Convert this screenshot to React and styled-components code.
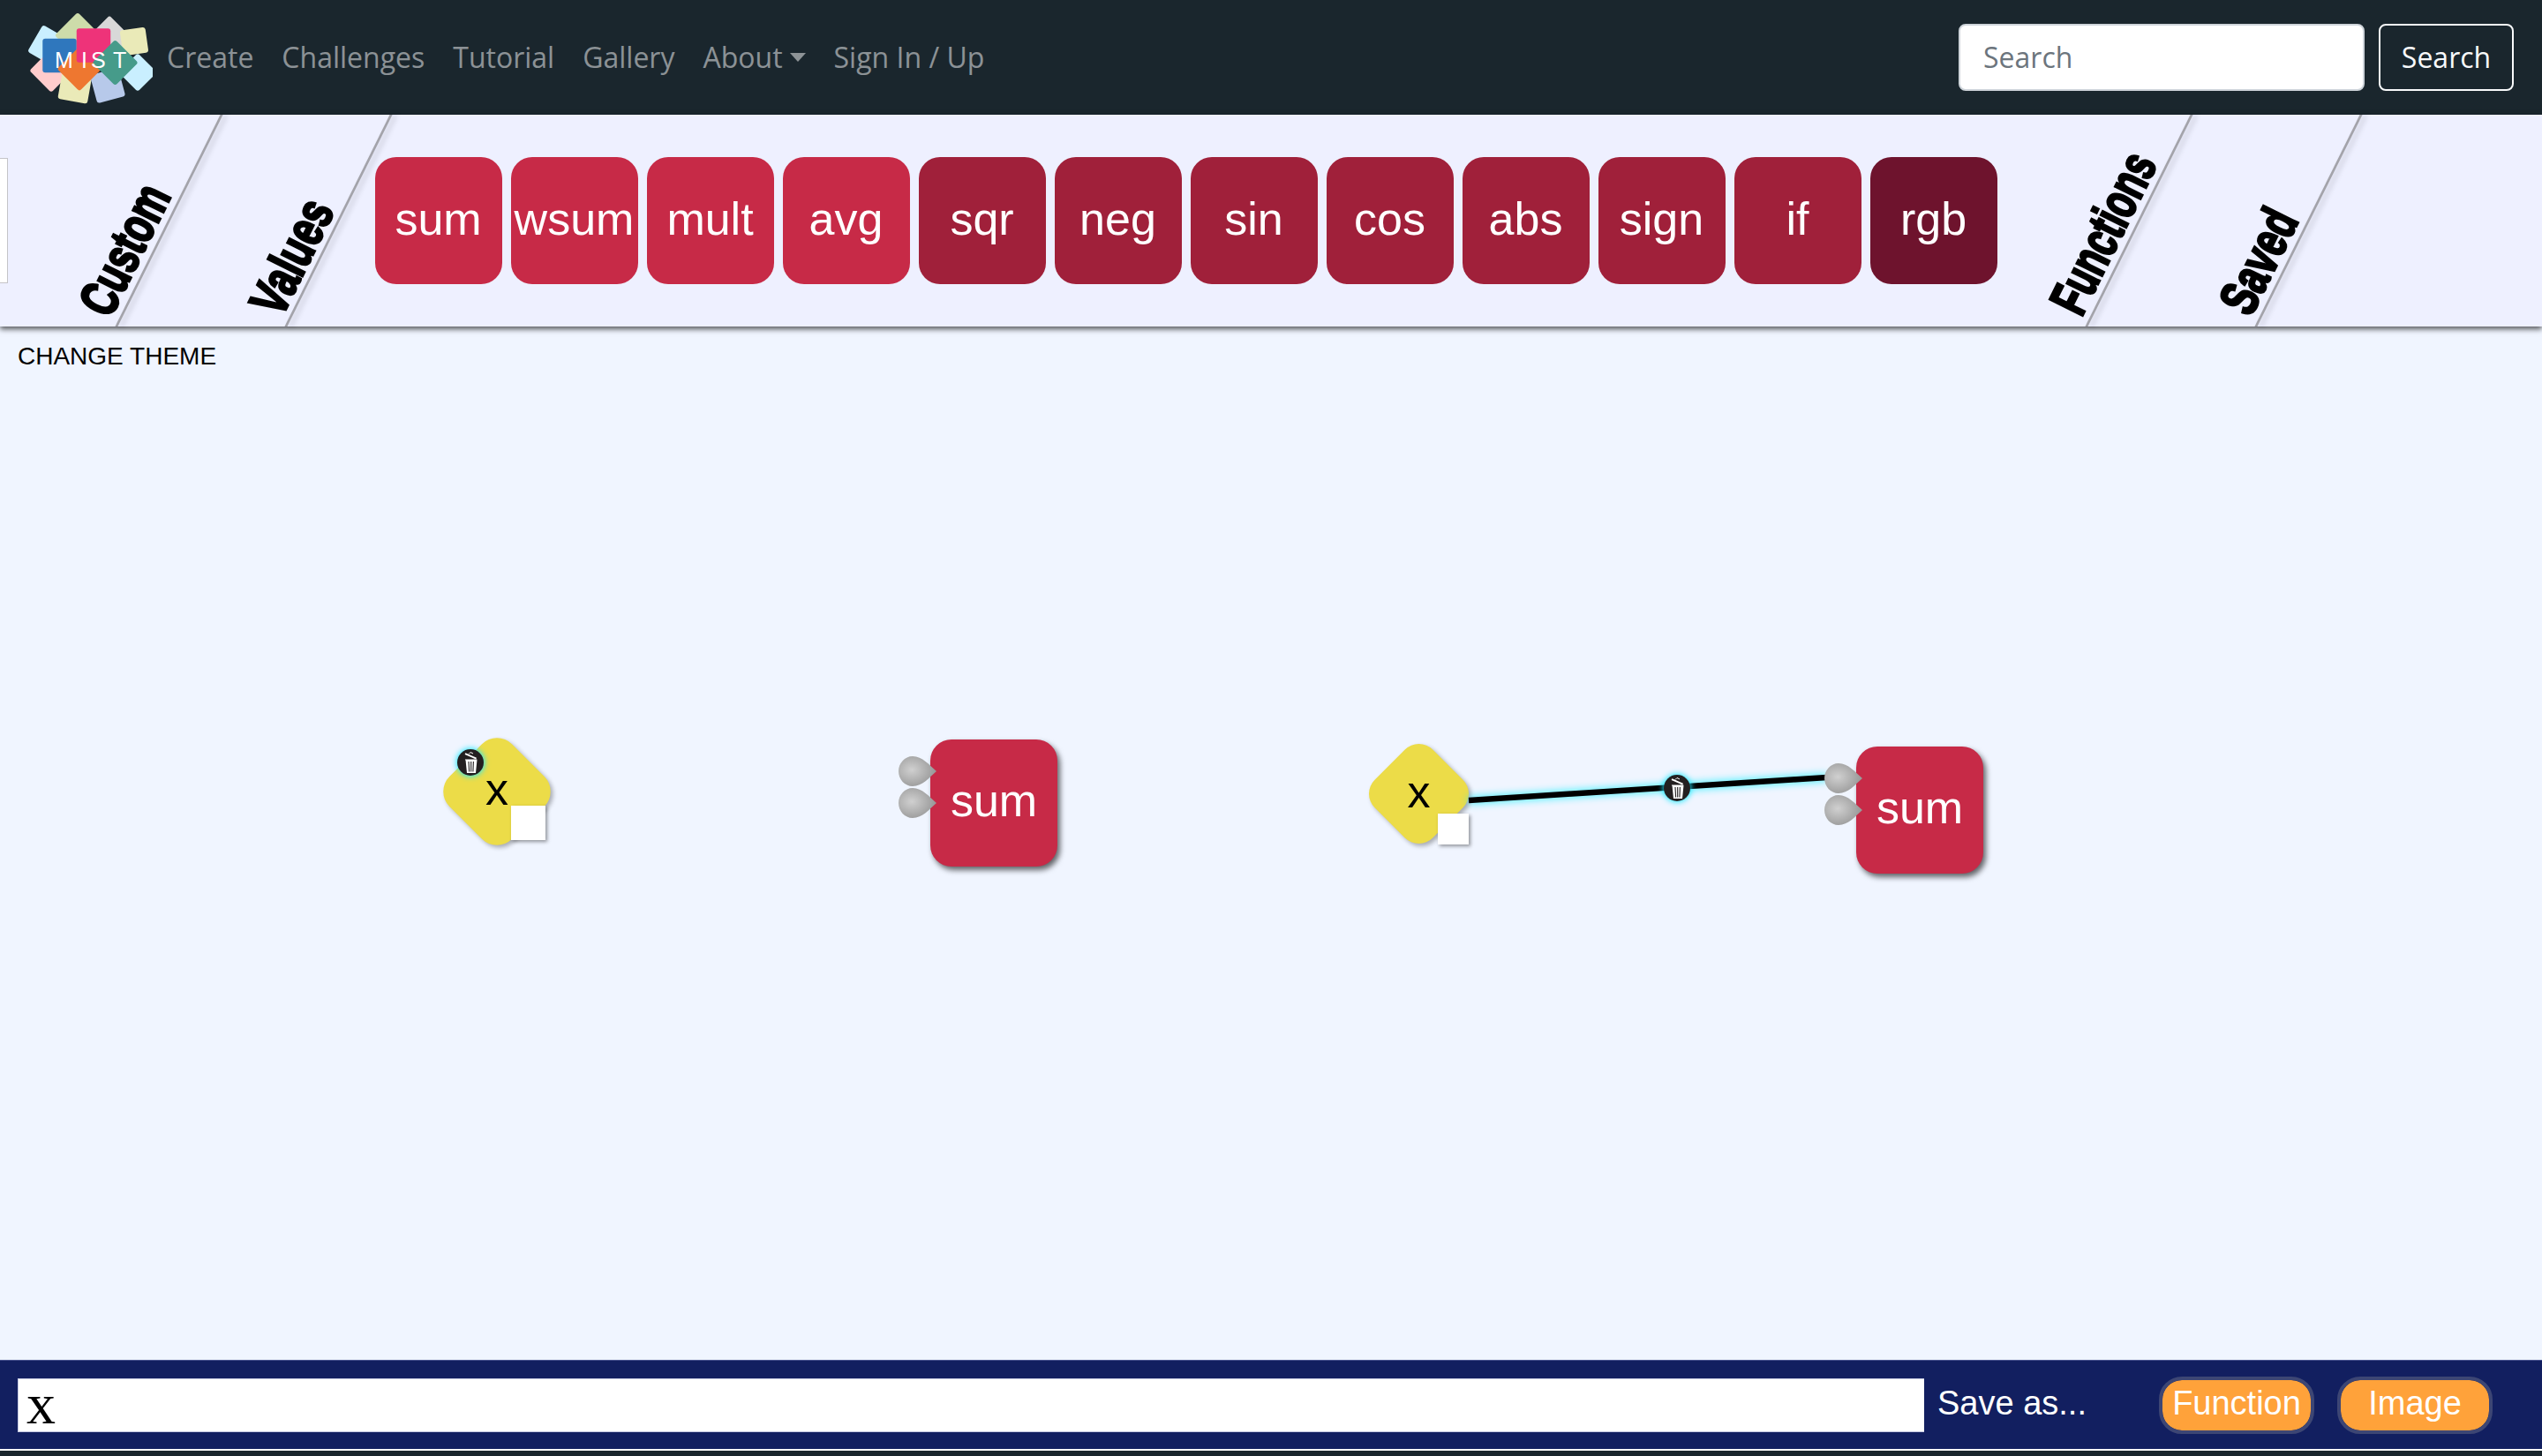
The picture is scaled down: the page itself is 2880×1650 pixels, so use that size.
import React from 'react';
import styled, { createGlobalStyle } from 'styled-components';

const Global = createGlobalStyle`
  html, body { margin: 0; padding: 0; background: #f0f5ff; overflow: hidden; }
  * { box-sizing: border-box; }
`;

const Page = styled.div`
  display: flex; flex-direction: column; height: 1650px; width: 2880px;
  font-family: "Liberation Sans", Arial, sans-serif;
`;

const Navbar = styled.nav`
  display: flex; align-items: center; height: 130px; flex: none; padding: 0 32px;
  background: #1a262d; font-family: "Open Sans", sans-serif; font-size: 32px;
`;
const Logo = styled.svg`width: 141px; height: 130px; flex: none;`;
const NavLinks = styled.div`display: flex; flex: 1; align-items: center; margin-top: -1px;`;
const NavLink = styled.a`
  display: flex; align-items: center; padding: 0 16px; color: rgba(255,255,255,.5); line-height: 48px;
`;
const Caret = styled.span`
  margin-left: 8px; width: 0; height: 0; border-top: 10px solid rgba(255,255,255,.5);
  border-left: 9px solid transparent; border-right: 9px solid transparent;
`;
const SearchForm = styled.form`display: flex; gap: 16px; margin: 0;`;
const SearchInput = styled.input`
  width: 460px; height: 76px; padding: 0 26px 2px; border: 2px solid #ced4da; border-radius: 8px;
  background: #fff; font: 32px "Open Sans", sans-serif; color: #495057;
  &::placeholder { color: #6c757d; opacity: 1; }
`;
const SearchButton = styled.button`
  width: 153px; height: 76px; padding: 0 0 2px; background: transparent; border: 2px solid #f8f9fa; border-radius: 8px;
  color: #f8f9fa; font: 32px "Open Sans", sans-serif;
`;

const Toolbar = styled.div`
  position: relative; z-index: 1; display: flex; flex: none; height: 240px; background: #eef0ff;
  box-shadow: 0 3px 6px rgba(0,0,0,.65);
`;
const Stub = styled.div`
  flex: none; align-self: center; width: 9px; height: 142px; margin-top: -1px; background: #fff;
  border: 1px solid #c4c4c8; border-left: 0;
`;
const Tab = styled.div`
  position: relative; flex: none; width: ${p => p.$w}px; display: flex; align-items: center; justify-content: center;
  &::after {
    content: ""; position: absolute; top: 0; bottom: 0; right: 0; width: 3px; background: #a3a3aa;
    transform: skewX(-26.4deg); box-shadow: 5px 0 6px rgba(0,0,0,.2);
  }
`;
const TabLabel = styled.span`
  white-space: nowrap; color: #000; font: 900 60px/60px "Liberation Sans", sans-serif;
  -webkit-text-stroke: 3px #000;
  transform: translate(${p => p.$x}px, ${p => p.$y}px) rotate(-63.6deg) scaleX(${p => p.$sx});
`;
const Blocks = styled.div`display: flex; align-items: center; gap: 10px; padding-left: 40px; flex: none;`;
const Block = styled.div`
  width: 144px; height: 144px; padding-bottom: 4px; border-radius: 24px; display: flex; align-items: center; justify-content: center;
  color: #fff; font-size: 52px; background: ${p => p.$c};
`;

const Stage = styled.div`position: relative; flex: 1; background: #f0f5ff;`;
const ThemeButton = styled.div`
  position: absolute; left: 20px; top: 18px; font-size: 28px; line-height: 32px; color: #000;
`;
const SumNode = styled.div`
  position: absolute; left: ${p => p.$x}px; top: ${p => p.$y}px; width: 144px; height: 144px; padding-bottom: 6px;
  border-radius: 24px; background: #c72a47; color: #fff; font-size: 52px;
  display: flex; align-items: center; justify-content: center; box-shadow: 3px 4px 6px rgba(0,0,0,.6);
`;
const ValueNode = styled.div`
  position: absolute; left: ${p => p.$x}px; top: ${p => p.$y}px; width: ${p => p.$s}px; height: ${p => p.$s}px;
  display: flex; align-items: center; justify-content: center; color: #000; font-size: 52px;
  &::before {
    content: ""; position: absolute; inset: 0; border-radius: 24%; background: #ecdc48;
    transform: rotate(45deg); box-shadow: 4px 0 5px rgba(0,0,0,.3);
  }
`;
const ValueText = styled.span`position: relative; line-height: 1; transform: translateY(-3px);`;
const OutPort = styled.div`
  position: absolute; left: ${p => p.$x}px; top: ${p => p.$y}px; width: ${p => p.$s}px; height: ${p => p.$s}px;
  background: #fff; box-shadow: 2px 2px 4px rgba(0,0,0,.4);
`;
const Port = styled.svg`
  position: absolute; left: ${p => p.$x}px; top: ${p => p.$y}px; width: 43px; height: 34px; overflow: visible;
`;
const WireLayer = styled.svg`position: absolute; inset: 0; width: 100%; height: 100%; pointer-events: none;`;
const Wire = styled.line`stroke: #000; stroke-width: 6.5; filter: drop-shadow(0 0 5px #19f0ff);`;
const Trash = styled.svg`
  position: absolute; left: ${p => p.$x - 15}px; top: ${p => p.$y - 15}px; width: 30px; height: 30px;
  border-radius: 50%; background: #231f20; box-shadow: 0 0 6px 1px #1fe8ff; overflow: visible;
`;

const SaveBar = styled.div`
  flex: none; height: 101px; display: flex; align-items: center; padding: 0 0 0 20px; background: #121f60;
  border-top: 1px solid #4a5590; color: #fff;
`;
const ExprInput = styled.input`
  flex: none; width: 2160px; height: 61px; padding: 0 0 2px 9px; border: 0; border-top: 1px solid #c4c8e0; border-left: 1px solid #c4c8e0;
  border-bottom: 1px solid #c4c8e0; background: #fff; color: #000; outline: 0;
  font: 66px "Liberation Serif", serif;
`;
const SaveLabel = styled.span`flex: none; width: 266px; padding: 0 0 4px 15px; font-size: 38px; white-space: nowrap;`;
const SaveButton = styled.div`
  flex: none; width: 176px; height: 65px; margin-right: 26px; padding-bottom: 4px; border: 4px solid #3d4674; border-radius: 26px;
  background: #ffa23a; background-clip: padding-box; color: #fff; font-size: 38px;
  display: flex; align-items: center; justify-content: center;
`;
const WhiteRule = styled.div`flex: none; height: 2px; background: #fff;`;
const Footer = styled.div`flex: none; height: 6px; background: #1a262d;`;

const tiles = [
  { x: 55, y: 52, s: 35, r: 30, c: '#c9efff' },
  { x: 88, y: 40, s: 37, r: 45, c: '#cddcaa' },
  { x: 124, y: 43, s: 36, r: 45, c: '#d8d8d8' },
  { x: 152, y: 47, s: 29, r: -8, c: '#eaeab8' },
  { x: 156, y: 82, s: 31, r: 45, c: '#c9efff' },
  { x: 58, y: 80, s: 35, r: 45, c: '#ffcccc' },
  { x: 85, y: 98, s: 34, r: 10, c: '#eaeab8' },
  { x: 122, y: 97, s: 33, r: -15, c: '#b7c9ea' },
  { x: 67.5, y: 63, s: 38.5, r: 0, c: '#2f77bd' },
  { x: 90, y: 78, s: 36, r: 45, c: '#ee7730' },
  { x: 106, y: 51.5, s: 38.5, r: 0, c: '#ee3379' },
  { x: 130.5, y: 71, s: 37, r: 45, c: '#469b8a' },
];

const MistLogo = () => (
  <Logo viewBox="32 0 141 130">
    {tiles.map((t, i) => (
      <rect key={i} x={t.x - t.s / 2} y={t.y - t.s / 2} width={t.s} height={t.s} rx="3" fill={t.c}
        transform={`rotate(${t.r} ${t.x} ${t.y})`} />
    ))}
    <text x="62 92 103 128" y="77" fontFamily="Liberation Sans, sans-serif" fontSize="25" fill="#fff">MIST</text>
  </Logo>
);

const PortShape = ({ x, y }) => (
  <Port $x={x} $y={y} viewBox="0 0 43 34">
    <defs>
      <radialGradient id="portFill" cx="35%" cy="45%" r="70%">
        <stop offset="0" stopColor="#d0d0d0" />
        <stop offset="1" stopColor="#929292" />
      </radialGradient>
    </defs>
    <path d="M43 17C35 10 27 0 16 0 7 0 0 8 0 17 0 26 7 34 16 34 27 34 35 24 43 17Z" fill="url(#portFill)" />
  </Port>
);

const TrashIcon = ({ x, y }) => (
  <Trash $x={x} $y={y} viewBox="-15 -15 30 30">
    <path d="M-6 -9.8L6.6 -4.4" stroke="#fff" strokeWidth="1.8" />
    <path d="M-2 -9.5L0 -11.5L3 -10" stroke="#fff" strokeWidth="1" fill="none" />
    <path d="M-6.2 -3.6H7.4V-2L6 12H-4L-5.4 -2Z" fill="#fff" />
    <path d="M-2 -1L-1.4 10.5M.7 -1V10.5M3.4 -1L2.9 10.5" stroke="#231f20" strokeWidth="1.1" />
  </Trash>
);

const blocks = [
  ['sum', '#c72a47'], ['wsum', '#c72a47'], ['mult', '#c72a47'], ['avg', '#c72a47'],
  ['sqr', '#a0203a'], ['neg', '#a0203a'], ['sin', '#a0203a'], ['cos', '#a0203a'],
  ['abs', '#a0203a'], ['sign', '#a0203a'], ['if', '#a0203a'], ['rgb', '#6e132d'],
];

export default function App() {
  return (
    <Page>
      <Global />
      <Navbar>
        <MistLogo />
        <NavLinks>
          <NavLink>Create</NavLink>
          <NavLink>Challenges</NavLink>
          <NavLink>Tutorial</NavLink>
          <NavLink>Gallery</NavLink>
          <NavLink>About<Caret /></NavLink>
          <NavLink>Sign In / Up</NavLink>
        </NavLinks>
        <SearchForm>
          <SearchInput placeholder="Search" />
          <SearchButton type="button">Search</SearchButton>
        </SearchForm>
      </Navbar>
      <Toolbar>
        <Stub />
        <Tab $w={183.5}><TabLabel $x={41} $y={33} $sx={.7}>Custom</TabLabel></Tab>
        <Tab $w={192}><TabLabel $x={43} $y={41} $sx={.72}>Values</TabLabel></Tab>
        <Blocks>
          {blocks.map(([name, c]) => <Block key={name} $c={c}>{name}</Block>)}
        </Blocks>
        <Tab $w={162.5}><TabLabel $x={40} $y={14} $sx={.68}>Functions</TabLabel></Tab>
        <Tab $w={192}><TabLabel $x={38} $y={46} $sx={.7}>Saved</TabLabel></Tab>
      </Toolbar>
      <Stage>
        <ThemeButton>CHANGE THEME</ThemeButton>

        <ValueNode $x={513} $y={477} $s={100}>
          <ValueText>x</ValueText>
          <OutPort $x={66} $y={66} $s={39} />
        </ValueNode>
        <TrashIcon x={533} y={494} />

        <SumNode $x={1054} $y={468}>sum</SumNode>
        <PortShape x={1018} y={487} />
        <PortShape x={1018} y={523} />

        <ValueNode $x={1561} $y={483} $s={93}>
          <ValueText>x</ValueText>
          <OutPort $x={67.5} $y={69} $s={35} />
        </ValueNode>
        <WireLayer>
          <Wire x1="1664" y1="537" x2="2070" y2="511" />
        </WireLayer>
        <TrashIcon x={1900} y={523} />
        <SumNode $x={2103} $y={476}>sum</SumNode>
        <PortShape x={2067} y={495} />
        <PortShape x={2067} y={531} />
      </Stage>
      <SaveBar>
        <ExprInput readOnly value="x" />
        <SaveLabel>Save as...</SaveLabel>
        <SaveButton>Function</SaveButton>
        <SaveButton>Image</SaveButton>
      </SaveBar>
      <WhiteRule />
      <Footer />
    </Page>
  );
}
